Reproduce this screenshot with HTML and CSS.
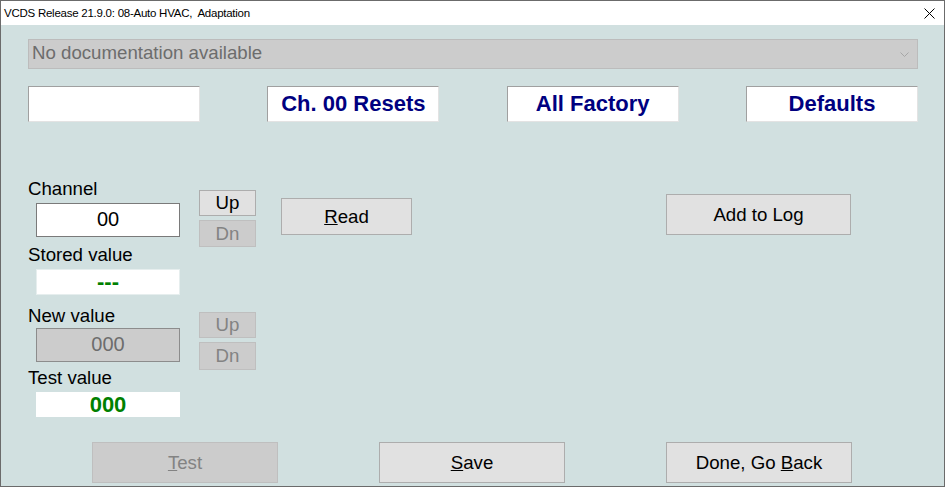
FILE: index.html
```html
<!DOCTYPE html>
<html lang="en">
  <head>
    <meta charset="UTF-8" />
    <meta name="viewport" content="width=device-width, initial-scale=1.0" />
    <title>VCDS Adaptation</title>
    <link rel="stylesheet" href="styles.css">
  </head>

  <body>
    <div class="window">
      <div class="titlebar">
        <span class="title">VCDS Release 21.9.0: 08-Auto HVAC,&nbsp; Adaptation</span>
        <svg class="close" width="11" height="11" viewBox="0 0 11 11">
          <path d="M0.5 0.5 L10.5 10.5 M10.5 0.5 L0.5 10.5" stroke="#000" stroke-width="1" fill="none" />
        </svg>
      </div>

      <div class="client">
        <div class="combo">
          <span>No documentation available</span>
          <svg class="chevron" width="9" height="5" viewBox="0 0 9 5">
            <path d="M0.5 0.5 L4.5 4.5 L8.5 0.5" stroke="#a6a6a6" fill="none" />
          </svg>
        </div>

        <div class="headers">
          <div class="header"></div>
          <div class="header">Ch. 00 Resets</div>
          <div class="header">All Factory</div>
          <div class="header">Defaults</div>
        </div>

        <div class="main">
          <div class="fields">
            <div class="label label-channel">Channel</div>
            <div class="field field-channel">00</div>

            <div class="label label-stored">Stored value</div>
            <div class="field field-stored">---</div>

            <div class="label label-new">New value</div>
            <div class="field field-new">000</div>

            <div class="label label-test">Test value</div>
            <div class="field field-test">000</div>
          </div>

          <div class="spin">
            <button class="btn btn-up1">Up</button>
            <button class="btn btn-dn1" disabled>Dn</button>
            <button class="btn btn-up2" disabled>Up</button>
            <button class="btn btn-dn2" disabled>Dn</button>
          </div>

          <button class="btn btn-read"><span><u>R</u>ead</span></button>
          <button class="btn btn-log">Add to Log</button>
        </div>

        <div class="actions">
          <button class="btn btn-action btn-test" disabled><span><u>T</u>est</span></button>
          <button class="btn btn-action"><span><u>S</u>ave</span></button>
          <button class="btn btn-action"><span>Done, Go <u>B</u>ack</span></button>
        </div>
      </div>
    </div>
  </body>
</html>
```

FILE: styles.css
```css
* {
  box-sizing: border-box;
}

body {
  margin: 0;
  font-family: "Liberation Sans", Arial, sans-serif;
  background-color: #ffffff;
}

.window {
  width: 945px;
  height: 487px;
  border: 1px solid #6b6b6b;
  background-color: #d1e0e0;
  display: flex;
  flex-direction: column;
}

.titlebar {
  height: 24px;
  background-color: #ffffff;
  display: flex;
  justify-content: space-between;
  align-items: center;
  padding: 0 9px 0 3px;
}

.title {
  font-size: 11.5px;
  letter-spacing: -0.25px;
  color: #000000;
}

.close {
  display: block;
}

.client {
  padding: 14px 0 0 27px;
}

.combo {
  width: 890px;
  height: 30px;
  background-color: #cccccc;
  border: 1px solid #bcbcbc;
  display: flex;
  justify-content: space-between;
  align-items: center;
  padding: 0 8px 0 3px;
  font-size: 14pt;
  color: #6d6d6d;
}

.combo span {
  margin-top: -3px;
}

.headers {
  width: 890px;
  margin-top: 17px;
  display: flex;
  justify-content: space-between;
}

.header {
  width: 172px;
  height: 36px;
  background-color: #ffffff;
  border-top: 1px solid #a0a0a0;
  border-left: 1px solid #a0a0a0;
  border-right: 1px solid #e3e3e3;
  border-bottom: 1px solid #e3e3e3;
  display: flex;
  justify-content: center;
  align-items: center;
  font-size: 22px;
  font-weight: bold;
  color: #000080;
}

.main {
  margin-top: 57px;
  display: flex;
  align-items: flex-start;
}

.fields {
  width: 171px;
}

.label {
  font-size: 14pt;
  line-height: 20px;
  color: #000000;
}

.label-stored {
  margin-top: 8px;
}

.label-new {
  margin-top: 11px;
}

.label-test {
  margin-top: 6px;
}

.field {
  width: 144px;
  margin-left: 8px;
  margin-top: 4px;
  background-color: #ffffff;
  display: flex;
  justify-content: center;
  align-items: center;
  font-size: 20px;
}

.field-channel {
  height: 34px;
  border: 1px solid #7a7a7a;
  padding-bottom: 2px;
}

.field-stored {
  height: 26px;
  border: 1px solid #e6eeee;
  color: #008000;
  font-size: 22px;
  font-weight: bold;
}

.field-new {
  height: 34px;
  margin-top: 2px;
  background-color: #cccccc;
  border: 1px solid #8c8c8c;
  color: #6d6d6d;
  padding-bottom: 2px;
}

.field-test {
  height: 25px;
  color: #008000;
  font-size: 22px;
  font-weight: bold;
}

.btn {
  display: flex;
  justify-content: center;
  align-items: center;
  padding: 0;
  font-family: "Liberation Sans", Arial, sans-serif;
  font-size: 14pt;
  color: #000000;
  background-color: #e1e1e1;
  border: 1px solid #adadad;
  border-radius: 0;
}

.btn:disabled {
  background-color: #cccccc;
  border-color: #bfbfbf;
  color: #838383;
}

.spin {
  width: 57px;
  display: flex;
  flex-direction: column;
}

.spin .btn {
  width: 57px;
}

.btn-up1 {
  margin-top: 11px;
  height: 26px;
}

.btn-dn1 {
  margin-top: 4px;
  height: 27px;
}

.btn-up2 {
  margin-top: 65px;
  height: 26px;
}

.btn-dn2 {
  margin-top: 4px;
  height: 28px;
}

.btn-read {
  width: 131px;
  height: 37px;
  margin-top: 19px;
  margin-left: 25px;
}

.btn-log {
  width: 185px;
  height: 41px;
  margin-top: 15px;
  margin-left: 254px;
}

.actions {
  margin-top: 25px;
  margin-left: 64px;
  display: flex;
  gap: 101px;
}

.btn-action {
  width: 186px;
  height: 41px;
}
```
